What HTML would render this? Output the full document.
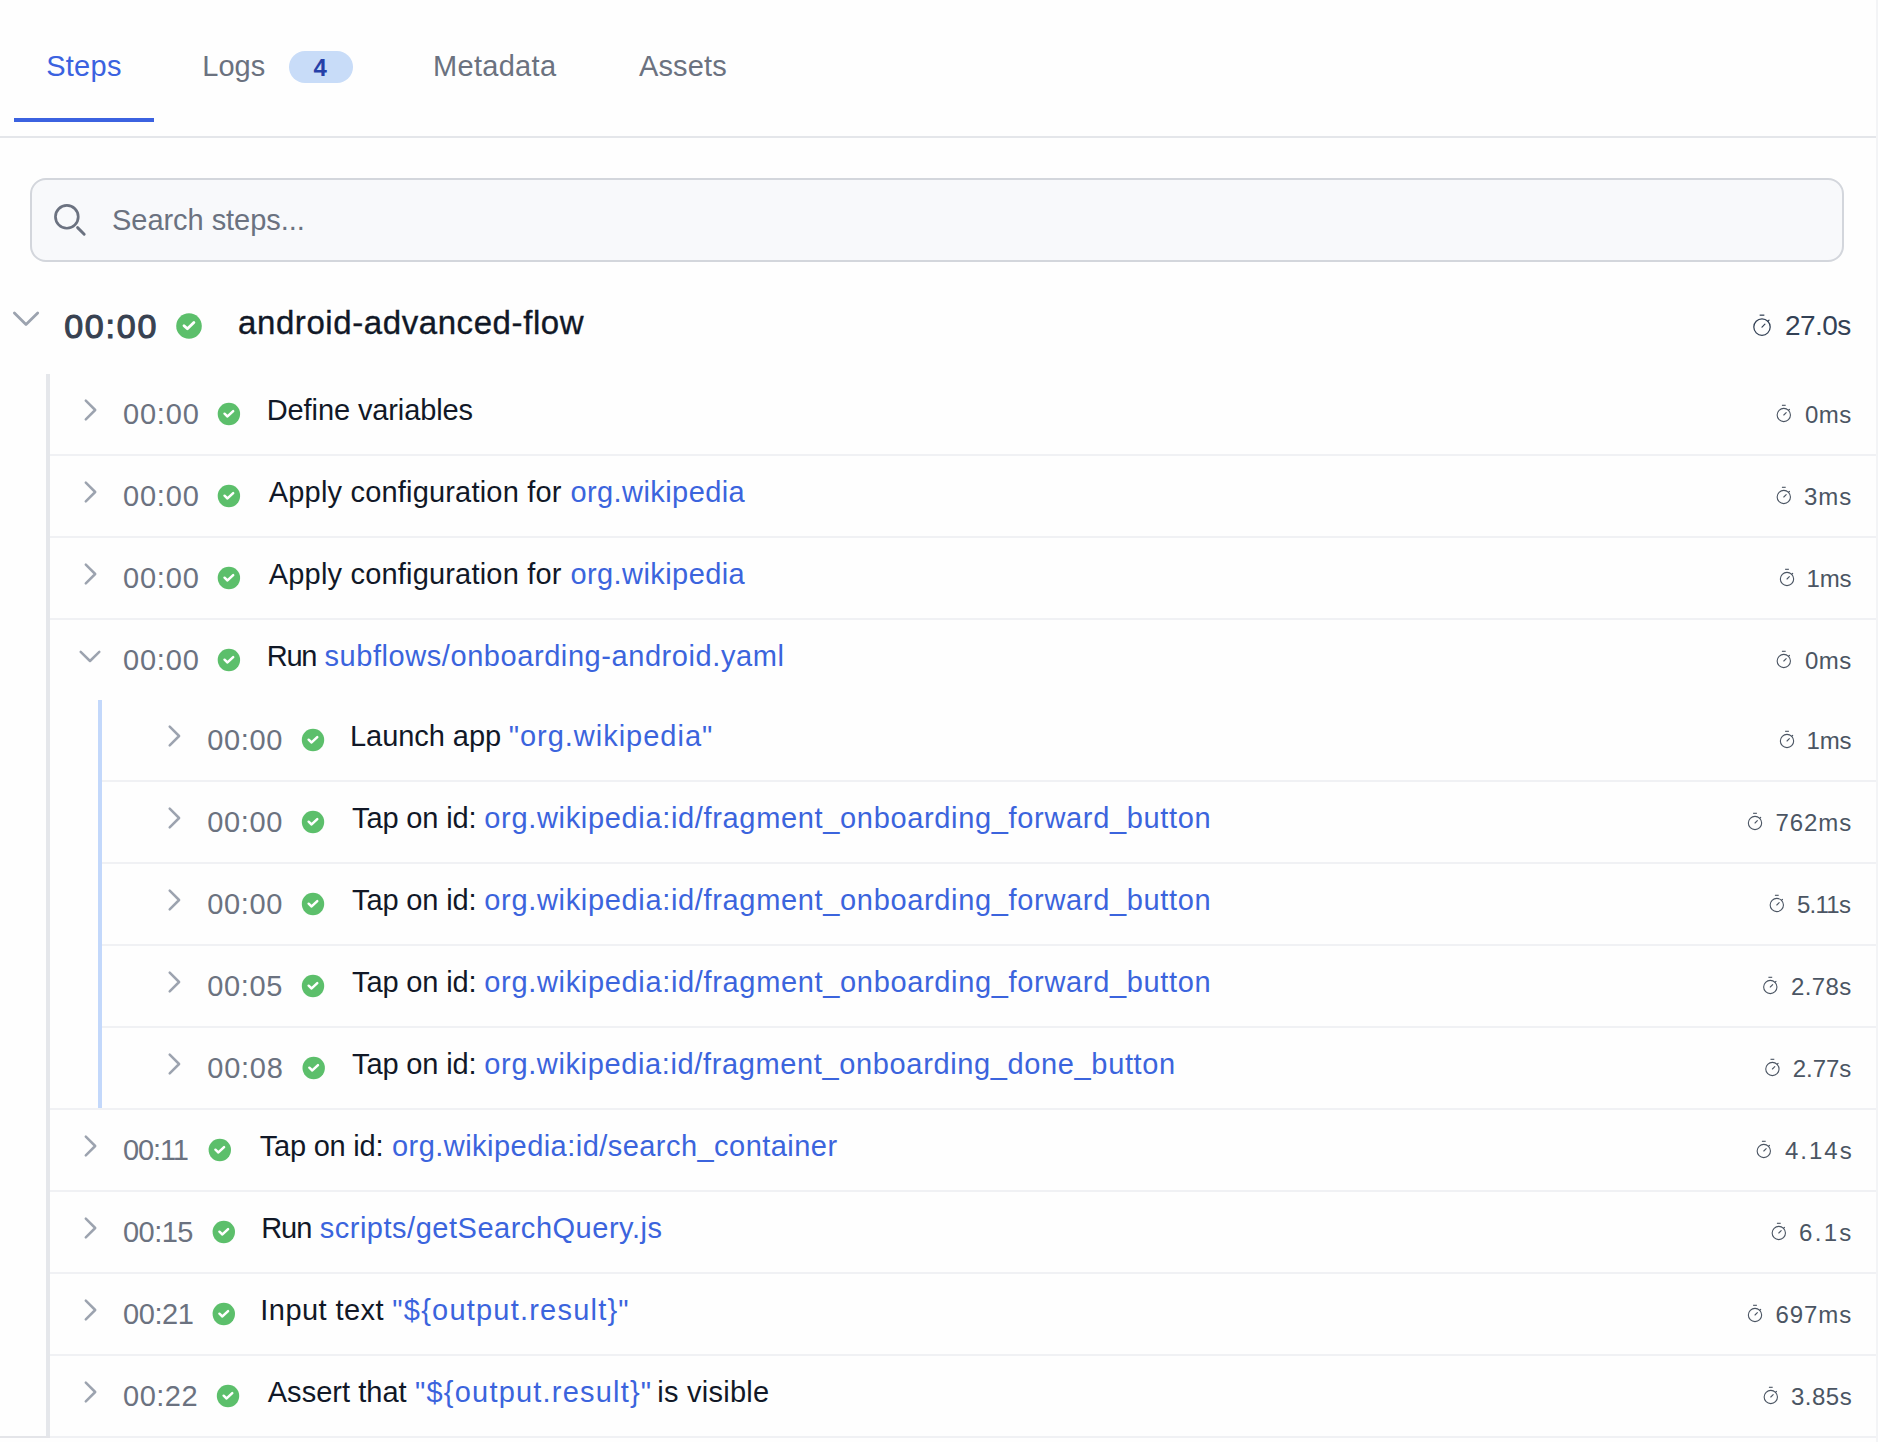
<!DOCTYPE html>
<html><head><meta charset="utf-8"><style>
html,body{margin:0;padding:0;background:#fefefe;width:1878px;height:1442px;overflow:hidden;position:relative;font-family:"Liberation Sans",sans-serif}
.a{position:absolute}
.t{position:absolute;white-space:pre}
svg.ov{position:absolute;left:0;top:0}
</style></head><body>
<div class="a" style="left:14px;top:118px;width:140px;height:4px;background:#3b62e0"></div><div class="a" style="left:0;top:136px;width:1876px;height:2px;background:#e4e6ea"></div><div class="a" style="left:1876px;top:0;width:2px;height:1442px;background:#f3f4f6"></div><div class="a" style="left:289px;top:51px;width:64px;height:32px;border-radius:16px;background:#c8dcf8"></div><div class="a" style="left:30px;top:178px;width:1814px;height:84px;box-sizing:border-box;border:2px solid #d3d6dc;border-radius:16px;background:#f8f9fb"></div><div class="a" style="left:46px;top:374px;width:4px;height:1064px;background:#e5e7eb"></div><div class="a" style="left:0;top:1436px;width:1876px;height:2px;background:#e4e5e9"></div><div class="a" style="left:98px;top:700px;width:4px;height:408px;background:#c3d8fb"></div><div class="a" style="left:50px;top:454px;width:1826px;height:2px;background:#f0f1f4"></div><div class="a" style="left:50px;top:536px;width:1826px;height:2px;background:#f0f1f4"></div><div class="a" style="left:50px;top:618px;width:1826px;height:2px;background:#f0f1f4"></div><div class="a" style="left:102px;top:780px;width:1774px;height:2px;background:#f0f1f4"></div><div class="a" style="left:102px;top:862px;width:1774px;height:2px;background:#f0f1f4"></div><div class="a" style="left:102px;top:944px;width:1774px;height:2px;background:#f0f1f4"></div><div class="a" style="left:102px;top:1026px;width:1774px;height:2px;background:#f0f1f4"></div><div class="a" style="left:50px;top:1190px;width:1826px;height:2px;background:#f0f1f4"></div><div class="a" style="left:50px;top:1272px;width:1826px;height:2px;background:#f0f1f4"></div><div class="a" style="left:50px;top:1354px;width:1826px;height:2px;background:#f0f1f4"></div><div class="a" style="left:50px;top:1436px;width:1826px;height:2px;background:#f0f1f4"></div><div class="a" style="left:50px;top:1108px;width:1826px;height:2px;background:#f0f1f4"></div>
<svg class="ov" width="1878" height="1442" viewBox="0 0 1878 1442"><circle cx="66.85" cy="216.85" r="11.4" fill="none" stroke="#6b7280" stroke-width="2.7"/><line x1="77.6" y1="227.6" x2="84.2" y2="234.2" stroke="#6b7280" stroke-width="2.9" stroke-linecap="round"/><polyline points="14.4,313 26,324.4 37.7,313" fill="none" stroke="#9ca3af" stroke-width="2.8" stroke-linecap="round" stroke-linejoin="round"/><circle cx="189.00" cy="326.00" r="12.80" fill="#5cbf6b"/><polyline points="184.02,325.66 187.41,328.83 193.87,322.60" fill="none" stroke="#fff" stroke-width="2.83" stroke-linecap="round" stroke-linejoin="round"/><g fill="none" stroke="#334155" stroke-width="1.25" stroke-linecap="round"><circle cx="1762.00" cy="327.10" r="8.19"/><polyline points="1762.00,327.10 1764.92,324.18"/><polyline points="1767.85,321.25 1769.02,320.08"/><polyline stroke-linecap="butt" points="1759.66,315.17 1764.34,315.17"/></g><polyline points="85.8,400.7 95.2,410 85.8,419.3" fill="none" stroke="#9ca3af" stroke-width="2.5" stroke-linecap="round" stroke-linejoin="round"/><circle cx="228.90" cy="414.00" r="11.20" fill="#5cbf6b"/><polyline points="224.54,413.70 227.51,416.48 233.16,411.03" fill="none" stroke="#fff" stroke-width="2.48" stroke-linecap="round" stroke-linejoin="round"/><g fill="none" stroke="#4b5563" stroke-width="1.1" stroke-linecap="round"><circle cx="1783.80" cy="415.00" r="6.65"/><polyline points="1783.80,415.00 1786.18,412.62"/><polyline points="1788.55,410.25 1789.50,409.30"/><polyline stroke-linecap="butt" points="1781.90,405.31 1785.70,405.31"/></g><polyline points="85.8,482.7 95.2,492 85.8,501.3" fill="none" stroke="#9ca3af" stroke-width="2.5" stroke-linecap="round" stroke-linejoin="round"/><circle cx="228.90" cy="496.00" r="11.20" fill="#5cbf6b"/><polyline points="224.54,495.70 227.51,498.48 233.16,493.03" fill="none" stroke="#fff" stroke-width="2.48" stroke-linecap="round" stroke-linejoin="round"/><g fill="none" stroke="#4b5563" stroke-width="1.1" stroke-linecap="round"><circle cx="1783.80" cy="497.00" r="6.65"/><polyline points="1783.80,497.00 1786.18,494.62"/><polyline points="1788.55,492.25 1789.50,491.30"/><polyline stroke-linecap="butt" points="1781.90,487.31 1785.70,487.31"/></g><polyline points="85.8,564.7 95.2,574 85.8,583.3" fill="none" stroke="#9ca3af" stroke-width="2.5" stroke-linecap="round" stroke-linejoin="round"/><circle cx="228.90" cy="578.00" r="11.20" fill="#5cbf6b"/><polyline points="224.54,577.70 227.51,580.48 233.16,575.03" fill="none" stroke="#fff" stroke-width="2.48" stroke-linecap="round" stroke-linejoin="round"/><g fill="none" stroke="#4b5563" stroke-width="1.1" stroke-linecap="round"><circle cx="1787.00" cy="579.00" r="6.65"/><polyline points="1787.00,579.00 1789.38,576.62"/><polyline points="1791.75,574.25 1792.70,573.30"/><polyline stroke-linecap="butt" points="1785.10,569.31 1788.90,569.31"/></g><polyline points="80.7,651.8 90,661 99.3,651.8" fill="none" stroke="#9ca3af" stroke-width="2.5" stroke-linecap="round" stroke-linejoin="round"/><circle cx="228.90" cy="660.00" r="11.20" fill="#5cbf6b"/><polyline points="224.54,659.70 227.51,662.48 233.16,657.03" fill="none" stroke="#fff" stroke-width="2.48" stroke-linecap="round" stroke-linejoin="round"/><g fill="none" stroke="#4b5563" stroke-width="1.1" stroke-linecap="round"><circle cx="1783.80" cy="661.00" r="6.65"/><polyline points="1783.80,661.00 1786.18,658.62"/><polyline points="1788.55,656.25 1789.50,655.30"/><polyline stroke-linecap="butt" points="1781.90,651.31 1785.70,651.31"/></g><polyline points="169.7,726.7 179.1,736 169.7,745.3" fill="none" stroke="#9ca3af" stroke-width="2.5" stroke-linecap="round" stroke-linejoin="round"/><circle cx="313.00" cy="740.00" r="11.20" fill="#5cbf6b"/><polyline points="308.64,739.70 311.61,742.48 317.26,737.03" fill="none" stroke="#fff" stroke-width="2.48" stroke-linecap="round" stroke-linejoin="round"/><g fill="none" stroke="#4b5563" stroke-width="1.1" stroke-linecap="round"><circle cx="1787.00" cy="741.00" r="6.65"/><polyline points="1787.00,741.00 1789.38,738.62"/><polyline points="1791.75,736.25 1792.70,735.30"/><polyline stroke-linecap="butt" points="1785.10,731.31 1788.90,731.31"/></g><polyline points="169.7,808.7 179.1,818 169.7,827.3" fill="none" stroke="#9ca3af" stroke-width="2.5" stroke-linecap="round" stroke-linejoin="round"/><circle cx="313.00" cy="822.00" r="11.20" fill="#5cbf6b"/><polyline points="308.64,821.70 311.61,824.48 317.26,819.03" fill="none" stroke="#fff" stroke-width="2.48" stroke-linecap="round" stroke-linejoin="round"/><g fill="none" stroke="#4b5563" stroke-width="1.1" stroke-linecap="round"><circle cx="1755.00" cy="823.00" r="6.65"/><polyline points="1755.00,823.00 1757.38,820.62"/><polyline points="1759.75,818.25 1760.70,817.30"/><polyline stroke-linecap="butt" points="1753.10,813.31 1756.90,813.31"/></g><polyline points="169.7,890.7 179.1,900 169.7,909.3" fill="none" stroke="#9ca3af" stroke-width="2.5" stroke-linecap="round" stroke-linejoin="round"/><circle cx="313.00" cy="904.00" r="11.20" fill="#5cbf6b"/><polyline points="308.64,903.70 311.61,906.48 317.26,901.03" fill="none" stroke="#fff" stroke-width="2.48" stroke-linecap="round" stroke-linejoin="round"/><g fill="none" stroke="#4b5563" stroke-width="1.1" stroke-linecap="round"><circle cx="1776.80" cy="905.00" r="6.65"/><polyline points="1776.80,905.00 1779.18,902.62"/><polyline points="1781.55,900.25 1782.50,899.30"/><polyline stroke-linecap="butt" points="1774.90,895.31 1778.70,895.31"/></g><polyline points="169.7,972.7 179.1,982 169.7,991.3" fill="none" stroke="#9ca3af" stroke-width="2.5" stroke-linecap="round" stroke-linejoin="round"/><circle cx="313.00" cy="986.00" r="11.20" fill="#5cbf6b"/><polyline points="308.64,985.70 311.61,988.48 317.26,983.03" fill="none" stroke="#fff" stroke-width="2.48" stroke-linecap="round" stroke-linejoin="round"/><g fill="none" stroke="#4b5563" stroke-width="1.1" stroke-linecap="round"><circle cx="1770.30" cy="987.00" r="6.65"/><polyline points="1770.30,987.00 1772.68,984.62"/><polyline points="1775.05,982.25 1776.00,981.30"/><polyline stroke-linecap="butt" points="1768.40,977.31 1772.20,977.31"/></g><polyline points="169.7,1054.7 179.1,1064 169.7,1073.3" fill="none" stroke="#9ca3af" stroke-width="2.5" stroke-linecap="round" stroke-linejoin="round"/><circle cx="313.70" cy="1068.00" r="11.20" fill="#5cbf6b"/><polyline points="309.34,1067.70 312.31,1070.48 317.96,1065.03" fill="none" stroke="#fff" stroke-width="2.48" stroke-linecap="round" stroke-linejoin="round"/><g fill="none" stroke="#4b5563" stroke-width="1.1" stroke-linecap="round"><circle cx="1772.40" cy="1069.00" r="6.65"/><polyline points="1772.40,1069.00 1774.78,1066.62"/><polyline points="1777.15,1064.25 1778.10,1063.30"/><polyline stroke-linecap="butt" points="1770.50,1059.31 1774.30,1059.31"/></g><polyline points="85.8,1136.7 95.2,1146 85.8,1155.3" fill="none" stroke="#9ca3af" stroke-width="2.5" stroke-linecap="round" stroke-linejoin="round"/><circle cx="219.80" cy="1150.00" r="11.20" fill="#5cbf6b"/><polyline points="215.44,1149.70 218.41,1152.48 224.06,1147.03" fill="none" stroke="#fff" stroke-width="2.48" stroke-linecap="round" stroke-linejoin="round"/><g fill="none" stroke="#4b5563" stroke-width="1.1" stroke-linecap="round"><circle cx="1763.80" cy="1151.00" r="6.65"/><polyline points="1763.80,1151.00 1766.18,1148.62"/><polyline points="1768.55,1146.25 1769.50,1145.30"/><polyline stroke-linecap="butt" points="1761.90,1141.31 1765.70,1141.31"/></g><polyline points="85.8,1218.7 95.2,1228 85.8,1237.3" fill="none" stroke="#9ca3af" stroke-width="2.5" stroke-linecap="round" stroke-linejoin="round"/><circle cx="223.80" cy="1232.00" r="11.20" fill="#5cbf6b"/><polyline points="219.44,1231.70 222.41,1234.48 228.06,1229.03" fill="none" stroke="#fff" stroke-width="2.48" stroke-linecap="round" stroke-linejoin="round"/><g fill="none" stroke="#4b5563" stroke-width="1.1" stroke-linecap="round"><circle cx="1778.80" cy="1233.00" r="6.65"/><polyline points="1778.80,1233.00 1781.18,1230.62"/><polyline points="1783.55,1228.25 1784.50,1227.30"/><polyline stroke-linecap="butt" points="1776.90,1223.31 1780.70,1223.31"/></g><polyline points="85.8,1300.7 95.2,1310 85.8,1319.3" fill="none" stroke="#9ca3af" stroke-width="2.5" stroke-linecap="round" stroke-linejoin="round"/><circle cx="223.80" cy="1314.00" r="11.20" fill="#5cbf6b"/><polyline points="219.44,1313.70 222.41,1316.48 228.06,1311.03" fill="none" stroke="#fff" stroke-width="2.48" stroke-linecap="round" stroke-linejoin="round"/><g fill="none" stroke="#4b5563" stroke-width="1.1" stroke-linecap="round"><circle cx="1755.00" cy="1315.00" r="6.65"/><polyline points="1755.00,1315.00 1757.38,1312.62"/><polyline points="1759.75,1310.25 1760.70,1309.30"/><polyline stroke-linecap="butt" points="1753.10,1305.31 1756.90,1305.31"/></g><polyline points="85.8,1382.7 95.2,1392 85.8,1401.3" fill="none" stroke="#9ca3af" stroke-width="2.5" stroke-linecap="round" stroke-linejoin="round"/><circle cx="228.00" cy="1396.00" r="11.20" fill="#5cbf6b"/><polyline points="223.64,1395.70 226.61,1398.48 232.26,1393.03" fill="none" stroke="#fff" stroke-width="2.48" stroke-linecap="round" stroke-linejoin="round"/><g fill="none" stroke="#4b5563" stroke-width="1.1" stroke-linecap="round"><circle cx="1770.80" cy="1397.00" r="6.65"/><polyline points="1770.80,1397.00 1773.18,1394.62"/><polyline points="1775.55,1392.25 1776.50,1391.30"/><polyline stroke-linecap="butt" points="1768.90,1387.31 1772.70,1387.31"/></g></svg>
<div class="t" id="steps" style="left:46.13px;top:51.95px;font-size:29px;line-height:29px;font-weight:400;color:#3b62e0;"><span class="g0" style="letter-spacing:0.300px">Steps</span></div><div class="t" id="logs" style="left:202.36px;top:51.95px;font-size:29px;line-height:29px;font-weight:400;color:#6b7280;"><span class="g0" style="letter-spacing:-0.033px">Logs</span></div><div class="t" id="badge4" style="left:313.51px;top:55.88px;font-size:24px;line-height:24px;font-weight:700;color:#2640a8;"><span class="g0" style="letter-spacing:0.000px">4</span></div><div class="t" id="meta" style="left:433.00px;top:51.55px;font-size:29px;line-height:29px;font-weight:400;color:#6b7280;"><span class="g0" style="letter-spacing:0.300px">Metadata</span></div><div class="t" id="assets" style="left:639.00px;top:51.95px;font-size:29px;line-height:29px;font-weight:400;color:#6b7280;"><span class="g0" style="letter-spacing:0.120px">Assets</span></div><div class="t" id="search" style="left:112.00px;top:205.65px;font-size:29px;line-height:29px;font-weight:400;color:#6b7280;"><span class="g0" style="letter-spacing:-0.043px">Search steps...</span></div><div class="t" id="r_ts" style="left:64.13px;top:309.42px;font-size:34px;line-height:34px;font-weight:400;color:#374151;-webkit-text-stroke:1.1px #374151;"><span class="g0" style="letter-spacing:1.775px">00:00</span></div><div class="t" id="r_title" style="left:238.00px;top:306.37px;font-size:33px;line-height:33px;font-weight:400;color:#111827;-webkit-text-stroke:0.35px #111827;"><span class="g0" style="letter-spacing:0.585px">android-advanced-flow</span></div><div class="t" id="r_dur" style="left:1785.00px;top:312.40px;font-size:28px;line-height:28px;font-weight:400;color:#334155;"><span class="g0" style="letter-spacing:-0.575px">27.0s</span></div><div class="t" id="ts0" style="left:123.00px;top:400.45px;font-size:29px;line-height:29px;font-weight:400;color:#6b7280;"><span class="g0" style="letter-spacing:0.800px">00:00</span></div><div class="t" id="title0" style="left:266.76px;top:396.45px;font-size:29px;line-height:29px;font-weight:400;color:#111827;"><span class="g0" style="letter-spacing:-0.107px">Define variables</span></div><div class="t" id="dur0" style="left:1805.00px;top:402.68px;font-size:24px;line-height:24px;font-weight:400;color:#4b5563;"><span class="g0" style="letter-spacing:0.500px">0ms</span></div><div class="t" id="ts1" style="left:123.00px;top:482.45px;font-size:29px;line-height:29px;font-weight:400;color:#6b7280;"><span class="g0" style="letter-spacing:0.800px">00:00</span></div><div class="t" id="title1" style="left:268.76px;top:478.45px;font-size:29px;line-height:29px;font-weight:400;color:#111827;"><span class="g0" style="letter-spacing:0.186px">Apply configuration for</span><span style="letter-spacing:0.714px"> </span><span class="g1" style="color:#3b64dd;letter-spacing:0.425px">org.wikipedia</span></div><div class="t" id="dur1" style="left:1804.00px;top:484.68px;font-size:24px;line-height:24px;font-weight:400;color:#4b5563;"><span class="g0" style="letter-spacing:1.000px">3ms</span></div><div class="t" id="ts2" style="left:123.00px;top:564.45px;font-size:29px;line-height:29px;font-weight:400;color:#6b7280;"><span class="g0" style="letter-spacing:0.800px">00:00</span></div><div class="t" id="title2" style="left:268.76px;top:560.45px;font-size:29px;line-height:29px;font-weight:400;color:#111827;"><span class="g0" style="letter-spacing:0.186px">Apply configuration for</span><span style="letter-spacing:0.714px"> </span><span class="g1" style="color:#3b64dd;letter-spacing:0.425px">org.wikipedia</span></div><div class="t" id="dur2" style="left:1806.56px;top:566.68px;font-size:24px;line-height:24px;font-weight:400;color:#4b5563;"><span class="g0" style="letter-spacing:-0.200px">1ms</span></div><div class="t" id="ts3" style="left:123.00px;top:646.45px;font-size:29px;line-height:29px;font-weight:400;color:#6b7280;"><span class="g0" style="letter-spacing:0.800px">00:00</span></div><div class="t" id="title3" style="left:266.76px;top:642.45px;font-size:29px;line-height:29px;font-weight:400;color:#111827;"><span class="g0" style="letter-spacing:-1.300px">Run</span><span style="letter-spacing:0.300px"> </span><span class="g1" style="color:#3b64dd;letter-spacing:0.571px">subflows/onboarding-android.yaml</span></div><div class="t" id="dur3" style="left:1805.00px;top:648.68px;font-size:24px;line-height:24px;font-weight:400;color:#4b5563;"><span class="g0" style="letter-spacing:0.500px">0ms</span></div><div class="t" id="ts4" style="left:207.36px;top:726.45px;font-size:29px;line-height:29px;font-weight:400;color:#6b7280;"><span class="g0" style="letter-spacing:0.600px">00:00</span></div><div class="t" id="title4" style="left:350.00px;top:722.45px;font-size:29px;line-height:29px;font-weight:400;color:#111827;"><span class="g0" style="letter-spacing:-0.056px">Launch app</span><span style="letter-spacing:-0.444px"> </span><span class="g1" style="color:#3b64dd;letter-spacing:0.986px">"org.wikipedia"</span></div><div class="t" id="dur4" style="left:1806.56px;top:728.68px;font-size:24px;line-height:24px;font-weight:400;color:#4b5563;"><span class="g0" style="letter-spacing:-0.200px">1ms</span></div><div class="t" id="ts5" style="left:207.36px;top:808.45px;font-size:29px;line-height:29px;font-weight:400;color:#6b7280;"><span class="g0" style="letter-spacing:0.600px">00:00</span></div><div class="t" id="title5" style="left:352.00px;top:804.45px;font-size:29px;line-height:29px;font-weight:400;color:#111827;"><span class="g0" style="letter-spacing:-0.122px">Tap on id:</span><span style="letter-spacing:-0.278px"> </span><span class="g1" style="color:#3b64dd;letter-spacing:0.662px">org.wikipedia:id/fragment_onboarding_forward_button</span></div><div class="t" id="dur5" style="left:1775.56px;top:810.68px;font-size:24px;line-height:24px;font-weight:400;color:#4b5563;"><span class="g0" style="letter-spacing:0.900px">762ms</span></div><div class="t" id="ts6" style="left:207.36px;top:890.45px;font-size:29px;line-height:29px;font-weight:400;color:#6b7280;"><span class="g0" style="letter-spacing:0.600px">00:00</span></div><div class="t" id="title6" style="left:352.00px;top:886.45px;font-size:29px;line-height:29px;font-weight:400;color:#111827;"><span class="g0" style="letter-spacing:-0.122px">Tap on id:</span><span style="letter-spacing:-0.278px"> </span><span class="g1" style="color:#3b64dd;letter-spacing:0.662px">org.wikipedia:id/fragment_onboarding_forward_button</span></div><div class="t" id="dur6" style="left:1797.00px;top:892.68px;font-size:24px;line-height:24px;font-weight:400;color:#4b5563;"><span class="g0" style="letter-spacing:-0.750px">5.11s</span></div><div class="t" id="ts7" style="left:207.36px;top:972.45px;font-size:29px;line-height:29px;font-weight:400;color:#6b7280;"><span class="g0" style="letter-spacing:0.600px">00:05</span></div><div class="t" id="title7" style="left:352.00px;top:968.45px;font-size:29px;line-height:29px;font-weight:400;color:#111827;"><span class="g0" style="letter-spacing:-0.122px">Tap on id:</span><span style="letter-spacing:-0.278px"> </span><span class="g1" style="color:#3b64dd;letter-spacing:0.662px">org.wikipedia:id/fragment_onboarding_forward_button</span></div><div class="t" id="dur7" style="left:1791.00px;top:974.68px;font-size:24px;line-height:24px;font-weight:400;color:#4b5563;"><span class="g0" style="letter-spacing:0.375px">2.78s</span></div><div class="t" id="ts8" style="left:207.36px;top:1054.45px;font-size:29px;line-height:29px;font-weight:400;color:#6b7280;"><span class="g0" style="letter-spacing:0.725px">00:08</span></div><div class="t" id="title8" style="left:352.00px;top:1050.45px;font-size:29px;line-height:29px;font-weight:400;color:#111827;"><span class="g0" style="letter-spacing:-0.122px">Tap on id:</span><span style="letter-spacing:-0.278px"> </span><span class="g1" style="color:#3b64dd;letter-spacing:0.634px">org.wikipedia:id/fragment_onboarding_done_button</span></div><div class="t" id="dur8" style="left:1792.76px;top:1056.68px;font-size:24px;line-height:24px;font-weight:400;color:#4b5563;"><span class="g0" style="letter-spacing:-0.050px">2.77s</span></div><div class="t" id="ts9" style="left:123.00px;top:1136.45px;font-size:29px;line-height:29px;font-weight:400;color:#6b7280;"><span class="g0" style="letter-spacing:-1.125px">00:11</span></div><div class="t" id="title9" style="left:259.76px;top:1132.45px;font-size:29px;line-height:29px;font-weight:400;color:#111827;"><span class="g0" style="letter-spacing:-0.222px">Tap on id:</span><span style="letter-spacing:0.622px"> </span><span class="g1" style="color:#3b64dd;letter-spacing:0.459px">org.wikipedia:id/search_container</span></div><div class="t" id="dur9" style="left:1785.00px;top:1138.68px;font-size:24px;line-height:24px;font-weight:400;color:#4b5563;"><span class="g0" style="letter-spacing:2.000px">4.14s</span></div><div class="t" id="ts10" style="left:123.00px;top:1218.45px;font-size:29px;line-height:29px;font-weight:400;color:#6b7280;"><span class="g0" style="letter-spacing:-0.525px">00:15</span></div><div class="t" id="title10" style="left:261.13px;top:1214.45px;font-size:29px;line-height:29px;font-weight:400;color:#111827;"><span class="g0" style="letter-spacing:-0.950px">Run</span><span style="letter-spacing:0.150px"> </span><span class="g1" style="color:#3b64dd;letter-spacing:0.517px">scripts/getSearchQuery.js</span></div><div class="t" id="dur10" style="left:1799.00px;top:1220.68px;font-size:24px;line-height:24px;font-weight:400;color:#4b5563;"><span class="g0" style="letter-spacing:2.333px">6.1s</span></div><div class="t" id="ts11" style="left:123.00px;top:1300.45px;font-size:29px;line-height:29px;font-weight:400;color:#6b7280;"><span class="g0" style="letter-spacing:-0.400px">00:21</span></div><div class="t" id="title11" style="left:260.36px;top:1296.45px;font-size:29px;line-height:29px;font-weight:400;color:#111827;"><span class="g0" style="letter-spacing:0.433px">Input text</span><span style="letter-spacing:0.267px"> </span><span class="g1" style="color:#3b64dd;letter-spacing:1.212px">"${output.result}"</span></div><div class="t" id="dur11" style="left:1775.56px;top:1302.68px;font-size:24px;line-height:24px;font-weight:400;color:#4b5563;"><span class="g0" style="letter-spacing:0.900px">697ms</span></div><div class="t" id="ts12" style="left:123.00px;top:1382.45px;font-size:29px;line-height:29px;font-weight:400;color:#6b7280;"><span class="g0" style="letter-spacing:0.500px">00:22</span></div><div class="t" id="title12" style="left:267.76px;top:1378.45px;font-size:29px;line-height:29px;font-weight:400;color:#111827;"><span class="g0" style="letter-spacing:0.030px">Assert that</span><span style="letter-spacing:0.270px"> </span><span class="g1" style="color:#3b64dd;letter-spacing:1.200px">"${output.result}"</span><span style="letter-spacing:-3.100px"> </span><span class="g2" style="letter-spacing:0.244px">is visible</span></div><div class="t" id="dur12" style="left:1791.00px;top:1384.68px;font-size:24px;line-height:24px;font-weight:400;color:#4b5563;"><span class="g0" style="letter-spacing:0.500px">3.85s</span></div>
</body></html>
